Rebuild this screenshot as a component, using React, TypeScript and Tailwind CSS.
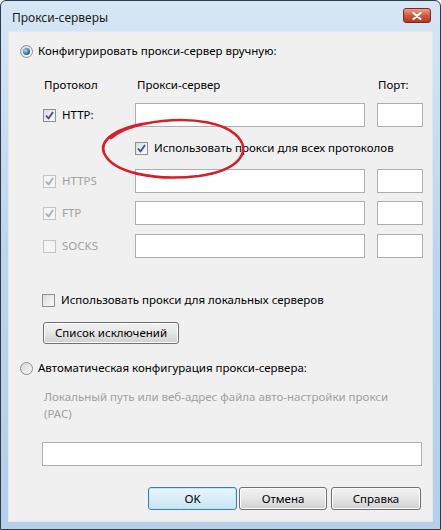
import type { ReactNode } from 'react';

const font = { fontFamily: '"Noto Sans", "Open Sans", sans-serif' };

function CheckBox({ checked, disabled }: { checked?: boolean; disabled?: boolean }) {
  return (
    <span
      className={`relative flex h-[13px] w-[13px] shrink-0 items-center justify-center border ${
        disabled ? 'border-[#c4c4c4] bg-[#f4f4f4]' : 'border-[#8e8f8f] bg-gradient-to-br from-[#dcdcdc] to-[#fbfbfb]'
      }`}
    >
      {checked && (
        <svg width="9" height="9" viewBox="0 0 9 9">
          <path
            d="M1 4.5 L3.5 7.5 L8 1"
            fill="none"
            stroke={disabled ? '#acacac' : '#3a4f8f'}
            strokeWidth="1.8"
            strokeLinejoin="round"
          />
        </svg>
      )}
    </span>
  );
}

function Radio({ checked }: { checked?: boolean }) {
  return (
    <span className="flex h-[13px] w-[13px] shrink-0 items-center justify-center rounded-full border border-[#8e8f8f] bg-gradient-to-br from-[#d6d6d6] to-[#fafafa]">
      {checked && (
        <span className="h-[7px] w-[7px] rounded-full bg-[radial-gradient(circle_at_35%_35%,#a9dcf5,#2a6f9e_60%,#17466b)]" />
      )}
    </span>
  );
}

function Field({ className }: { className: string }) {
  return <div className={`h-[24px] border border-[#abadb3] bg-white ${className}`} />;
}

function Button({ children, className, primary }: { children: ReactNode; className: string; primary?: boolean }) {
  return (
    <div
      className={`flex items-center justify-center rounded-[3px] border text-black ${
        primary
          ? 'border-[#3c7fb1] bg-gradient-to-b from-[#eaf6fd] to-[#c9e4f5] shadow-[inset_0_0_0_1px_#bfe6f9]'
          : 'border-[#707070] bg-gradient-to-b from-[#f2f2f2] via-[#e6e6e6] to-[#d0d0d0] shadow-[inset_0_0_0_1px_#fcfcfc]'
      } ${className}`}
    >
      {children}
    </div>
  );
}

function ProtoRow({ label, checked, disabled, className }: { label: string; checked?: boolean; disabled?: boolean; className: string }) {
  return (
    <div className={`grid h-[24px] grid-cols-[92px_242px_46px] items-center pl-[34px] ${className}`}>
      <div className="flex items-center gap-[6px]">
        <CheckBox checked={checked} disabled={disabled} />
        <span className={disabled ? 'text-[#a0a0a0]' : 'text-black'}>{label}</span>
      </div>
      <Field className="w-[230px]" />
      <Field className="w-[46px]" />
    </div>
  );
}

export default function App() {
  return (
    <div
      className="flex h-[530px] w-[441px] flex-col overflow-hidden rounded-t-[6px] border border-[#2d3b4c] bg-gradient-to-b from-[#d7e6f5] via-[#bcd4ec] to-[#b6cfe8] text-[11.5px] leading-[16px]"
      style={font}
    >
      {/* title bar */}
      <div className="flex h-[30px] shrink-0 items-center justify-between pl-[11px] pr-[9px]">
        <span className="mt-[3px] text-[12px] text-[#1b1b1b]">Прокси-серверы</span>
        <div className="-mt-[1px] flex h-[15px] w-[28px] items-center justify-center rounded-[3px] border border-[#7a2a1c] bg-gradient-to-b from-[#e8a190] via-[#cf5a40] to-[#b7351f]">
          <svg width="10" height="8" viewBox="0 0 10 8">
            <path d="M1.5 1 L8.5 7 M8.5 1 L1.5 7" stroke="#ffffff" strokeWidth="2.2" strokeLinecap="round" />
          </svg>
        </div>
      </div>

      {/* client area */}
      <div className="relative mx-[7px] mb-[7px] flex flex-1 flex-col border border-[#dfe8f2] bg-[#f0f0f0]">
        <div className="mt-[12px] flex h-[14px] items-center gap-[5px] pl-[11px]">
          <Radio checked />
          <span className="text-black">Конфигурировать прокси-сервер вручную:</span>
        </div>

        <div className="mt-[19px] grid h-[16px] grid-cols-[93px_241px_auto] items-center pl-[35px] text-black">
          <span>Протокол</span>
          <span>Прокси-сервер</span>
          <span>Порт:</span>
        </div>

        <ProtoRow label="HTTP:" checked className="mt-[10px]" />

        <div className="mt-[13px] flex h-[16px] items-center gap-[6px] pl-[126px]">
          <CheckBox checked />
          <span className="text-black">Использовать прокси для всех протоколов</span>
        </div>

        <ProtoRow label="HTTPS" checked disabled className="mt-[13px]" />
        <ProtoRow label="FTP" checked disabled className="mt-[8px]" />
        <ProtoRow label="SOCKS" disabled className="mt-[9px]" />

        <div className="mt-[34px] flex h-[16px] items-center gap-[6px] pl-[33px]">
          <CheckBox />
          <span className="text-black">Использовать прокси для локальных серверов</span>
        </div>

        <Button className="ml-[34px] mt-[14px] h-[22px] w-[136px]">Список исключений</Button>

        <div className="mt-[17px] flex h-[14px] items-center gap-[5px] pl-[11px]">
          <Radio />
          <span className="text-black">Автоматическая конфигурация прокси-сервера:</span>
        </div>

        <div className="mt-[13px] pl-[35px] leading-[17px] text-[#a0a0a0]">
          <div>Локальный путь или веб-адрес файла авто-настройки прокси</div>
          <div>(PAC)</div>
        </div>

        <Field className="ml-[33px] mt-[20px] w-[380px]" />

        <div className="mt-[21px] flex pl-[139px]">
          <Button primary className="h-[23px] w-[89px]">OK</Button>
          <Button className="ml-[2px] h-[23px] w-[88px]">Отмена</Button>
          <Button className="ml-[4px] h-[23px] w-[90px]">Справка</Button>
        </div>

        {/* hand-drawn red highlight */}
        <svg className="pointer-events-none absolute left-0 top-0" width="425" height="491" viewBox="0 0 425 491">
          <path
            d="M102 106 C125 86, 200 80, 226 102 C244 118, 232 138, 190 144 C145 149, 104 141, 95 121 C90 108, 108 95, 140 91"
            fill="none"
            stroke="#d61f2b"
            strokeWidth="2.6"
            strokeLinecap="round"
          />
        </svg>
      </div>
    </div>
  );
}
